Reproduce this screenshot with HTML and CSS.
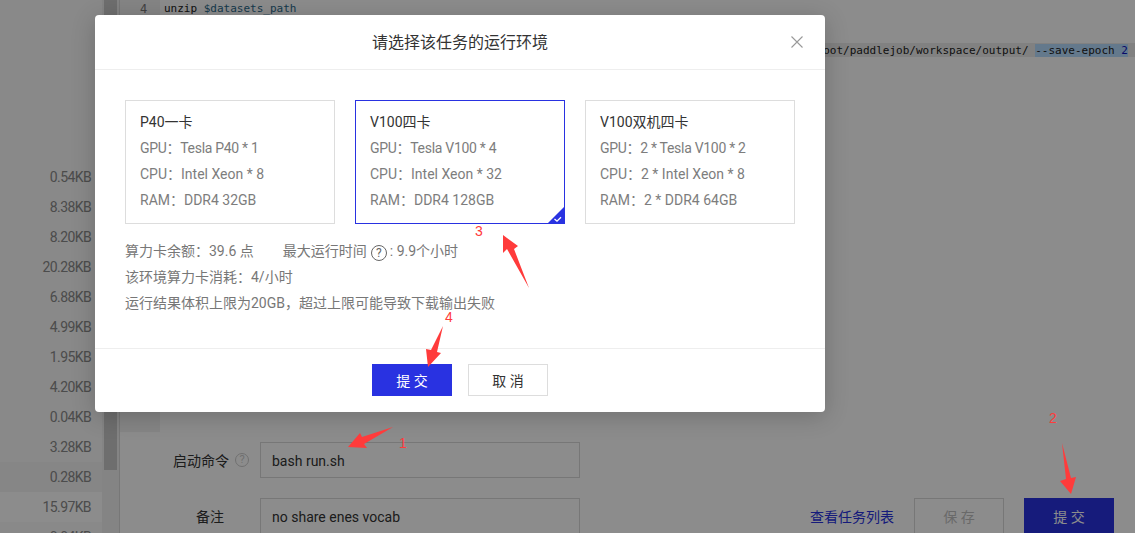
FILE: index.html
```html
<!DOCTYPE html>
<html lang="zh-CN">
<head>
  <meta charset="UTF-8">
  <meta name="viewport" content="width=device-width, initial-scale=1.0">
  <title>运行环境</title>
  <link rel="stylesheet" href="styles.css">
</head>
<body>
  <div class="page">
    <ul class="files">
      <li>0.54KB</li>
      <li>8.38KB</li>
      <li>8.20KB</li>
      <li>20.28KB</li>
      <li>6.88KB</li>
      <li>4.99KB</li>
      <li>1.95KB</li>
      <li>4.20KB</li>
      <li>0.04KB</li>
      <li>3.28KB</li>
      <li class="row-hover">0.28KB</li>
      <li class="row-light">15.97KB</li>
      <li>0.04KB</li>
    </ul>
    <div class="scroll-track"><div class="scroll-thumb"></div></div>

    <div class="main">
      <div class="editor">
        <div class="code-line"><span class="line-no">4</span><span class="code">unzip <span class="var">$datasets_path</span></span></div>
        <div class="code-line"><span class="line-no">5</span><span class="code"></span></div>
        <div class="code-line code-line-active"><span class="line-no">6</span><span class="code code-long">/root/paddlejob/workspace/output/ <span class="selected">--save-epoch <span class="num">2</span></span></span></div>
      </div>

      <div class="form">
        <div class="form-row">
          <label class="form-label">启动命令<span class="help help-muted">?</span></label>
          <div class="input">bash run.sh</div>
        </div>
        <div class="form-row">
          <label class="form-label form-label-plain">备注</label>
          <div class="input">no share enes vocab</div>
          <div class="actions">
            <a class="link" href="#">查看任务列表</a>
            <button class="btn btn-large btn-disabled">保 存</button>
            <button class="btn btn-large btn-primary">提 交</button>
          </div>
        </div>
      </div>
    </div>
  </div>

  <div class="mask">
    <div class="modal">
      <div class="modal-header">
        <span class="modal-title">请选择该任务的运行环境</span>
        <svg class="modal-close" width="12" height="12" viewBox="0 0 12 12"><path d="M.5.5l11 11M11.5.5l-11 11" fill="none" stroke="#999" stroke-width="1.1"/></svg>
      </div>
      <div class="modal-body">
        <div class="cards">
          <div class="card">
            <div class="card-title">P40一卡</div>
            <div class="card-gpu">GPU：Tesla P40 * 1</div>
            <div>CPU：Intel Xeon * 8</div>
            <div>RAM：DDR4 32GB</div>
          </div>
          <div class="card card-active">
            <div class="card-title">V100四卡</div>
            <div class="card-gpu">GPU：Tesla V100 * 4</div>
            <div>CPU：Intel Xeon * 32</div>
            <div>RAM：DDR4 128GB</div>
            <svg class="card-check" width="18" height="18" viewBox="0 0 18 18"><path d="M18 0v18H0z" fill="#2932e1"/><path d="M7.500 13l2.500 2.200 4-4" fill="none" stroke="#fff" stroke-width="1.300"/></svg>
          </div>
          <div class="card">
            <div class="card-title">V100双机四卡</div>
            <div class="card-gpu">GPU：2 * Tesla V100 * 2</div>
            <div>CPU：2 * Intel Xeon * 8</div>
            <div>RAM：2 * DDR4 64GB</div>
          </div>
        </div>
        <div class="info">
          <div class="info-line"><span>算力卡余额：39.6 点</span><span class="info-time">最大运行时间<span class="help">?</span>: 9.9个小时</span></div>
          <div class="info-line">该环境算力卡消耗：4/小时</div>
          <div class="info-line">运行结果体积上限为20GB，超过上限可能导致下载输出失败</div>
        </div>
      </div>
      <div class="modal-footer">
        <button class="btn btn-primary">提 交</button>
        <button class="btn">取 消</button>
      </div>
    </div>
  </div>

  <!-- 截图上的红色标注 -->
  <svg class="arrows" width="1135" height="533" viewBox="0 0 1135 533">
    <polygon points="393,427 362,437 360,433 348,447 367,448 364,444"/>
    <polygon points="1062,443 1071,478 1076,477 1071,494 1060,481 1066,479"/>
    <polygon points="503,235 518,246 514,249 529,288 507,249 503,253"/>
    <polygon points="443,326 437,352 441,353 428,367 426,349 431,350"/>
  </svg>
  <span class="mark mark-1">1</span>
  <span class="mark mark-2">2</span>
  <span class="mark mark-3">3</span>
  <span class="mark mark-4">4</span>
</body>
</html>
```

FILE: styles.css
```css
* {
  box-sizing: border-box;
}
html, body {
  margin: 0;
  height: 533px;
  overflow: hidden;
}
body {
  position: relative;
  background: #fff;
  color: #333;
  font-family: Roboto, "Noto Sans CJK SC", sans-serif;
  font-size: 14px;
}
ul {
  margin: 0;
  padding: 0;
  list-style: none;
}

/* 底层页面 */
.page {
  display: flex;
  height: 533px;
  overflow: hidden;
}
.files {
  flex: 0 0 102px;
  padding-top: 162px;
  background: #f9f9f9;
  color: #8a8a8a;
}
.files li {
  height: 30px;
  line-height: 30px;
  padding-right: 11px;
  text-align: right;
  letter-spacing: -.6px;
}
.files .row-hover {
  background: #f4f4f4;
}
.files .row-light {
  background: #fff;
}
.scroll-track {
  flex: 0 0 18px;
  padding-left: 2px;
  background: #f1f1f1;
  border-right: 1px solid #d9d9d9;
}
.scroll-thumb {
  width: 13px;
  height: 470px;
  background: #c8c8c8;
}
.main {
  flex: 1;
  min-width: 0;
  display: flex;
  flex-direction: column;
}

.editor {
  height: 432px;
  flex: none;
  background: linear-gradient(to right, #f3f3f3 40px, #fff 40px);
  overflow: hidden;
  font-family: "DejaVu Sans Mono", monospace;
  font-size: 11px;
  color: #222;
}
.code-line {
  display: flex;
  height: 21px;
  padding-top: 1px;
  line-height: 16px;
  white-space: pre;
}
.code-line-active .code {
  background: #ececec;
}
.line-no {
  flex: 0 0 44px;
  padding-left: 20px;
  font-size: 12px;
  color: #777;
}
.code {
  flex: 1;
  height: 14px;
}
.code-long {
  padding-left: 646px;
}
.var {
  color: #2c6a8c;
}
.selected {
  background: #b6dcff;
}
.num {
  color: #1111c0;
}

.form {
  display: flex;
  flex-direction: column;
  gap: 20px;
  padding-top: 10px;
}
.form-row {
  display: flex;
  align-items: center;
}
.form-label {
  display: flex;
  justify-content: flex-end;
  align-items: center;
  gap: 6px;
  width: 129px;
  margin-right: 11px;
  color: #333;
}
.form-label-plain {
  padding-right: 25px;
}
.input {
  width: 320px;
  height: 36px;
  padding: 0 11px;
  line-height: 36px;
  border: 1px solid #d9d9d9;
  color: #333;
}
.actions {
  display: flex;
  align-items: center;
  gap: 20px;
  margin-left: auto;
  padding-right: 21px;
}
.link {
  color: #2932e1;
  text-decoration: none;
}

.help {
  display: inline-block;
  width: 16px;
  height: 16px;
  margin: 4px 3px 0 4px;
  line-height: 14px;
  text-align: center;
  font-size: 12px;
  color: #666;
  border: 1px solid #666;
  border-radius: 50%;
}
.help-muted {
  width: 14px;
  height: 14px;
  margin: 0;
  line-height: 12px;
  font-size: 11px;
  color: #ccc;
  border-color: #ccc;
}

/* 按钮 */
.btn {
  width: 80px;
  height: 32px;
  padding: 0;
  font: inherit;
  color: #333;
  background: #fff;
  border: 1px solid #ddd;
}
.btn-large {
  width: 90px;
  height: 36px;
}
.btn-primary {
  color: #fff;
  background: #2932e1;
  border-color: #2932e1;
}
.btn-disabled {
  color: #c0c0c0;
  border-color: #d9d9d9;
}

/* 弹窗 */
.mask {
  position: absolute;
  inset: 0;
  padding: 15px 0 0 95px;
  background: rgba(0, 0, 0, .45);
}
.modal {
  width: 730px;
  height: 397px;
  display: flex;
  flex-direction: column;
  background: #fff;
  border-radius: 4px;
  box-shadow: 0 4px 24px rgba(0, 0, 0, .2);
}
.modal-header {
  flex: 0 0 55px;
  display: flex;
  align-items: center;
  justify-content: center;
  position: relative;
  padding-bottom: 2px;
  border-bottom: 1px solid #eee;
}
.modal-title {
  font-size: 16px;
  color: #333;
}
.modal-close {
  position: absolute;
  top: 21px;
  right: 22px;
}
.modal-body {
  flex: 1;
  padding: 30px 30px 0;
}
.cards {
  display: flex;
  gap: 20px;
}
.card {
  position: relative;
  width: 210px;
  height: 124px;
  padding: 8px 14px;
  border: 1px solid #ddd;
  line-height: 26px;
  color: #7d7d7d;
}
.card-title {
  color: #333;
}
.card-gpu {
  letter-spacing: -.3px;
}
.card-active {
  border-color: #2932e1;
}
.card-check {
  position: absolute;
  right: -1px;
  bottom: -1px;
}
.info {
  padding-top: 14px;
  color: #777;
  line-height: 26px;
}
.info-line {
  display: flex;
  align-items: center;
  height: 26px;
}
.info-time {
  display: flex;
  align-items: center;
  margin-left: 29px;
}
.modal-footer {
  flex: 0 0 64px;
  display: flex;
  justify-content: center;
  gap: 16px;
  padding-top: 15px;
  border-top: 1px solid #eee;
}

/* 红色标注 */
.arrows {
  position: absolute;
  left: 0;
  top: 0;
}
.arrows polygon {
  fill: #ff3b3b;
}
.mark {
  position: absolute;
  font-family: "Liberation Sans", sans-serif;
  font-size: 14px;
  line-height: 16px;
  color: #ff3b3b;
}
.mark-1 { left: 399px; top: 435px; }
.mark-2 { left: 1049px; top: 410px; }
.mark-3 { left: 475px; top: 223px; }
.mark-4 { left: 445px; top: 309px; }
```
